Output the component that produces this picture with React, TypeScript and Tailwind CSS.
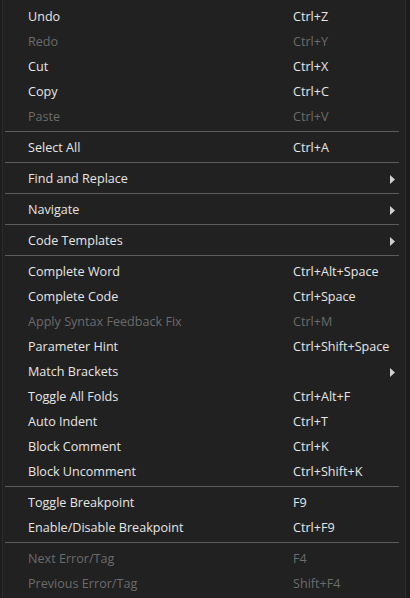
import React from "react";

type Item =
  | { sep: true }
  | { label: string; shortcut?: string; disabled?: boolean; sub?: boolean; sep?: false };

const items: Item[] = [
  { label: "Undo", shortcut: "Ctrl+Z" },
  { label: "Redo", shortcut: "Ctrl+Y", disabled: true },
  { label: "Cut", shortcut: "Ctrl+X" },
  { label: "Copy", shortcut: "Ctrl+C" },
  { label: "Paste", shortcut: "Ctrl+V", disabled: true },
  { sep: true },
  { label: "Select All", shortcut: "Ctrl+A" },
  { sep: true },
  { label: "Find and Replace", sub: true },
  { sep: true },
  { label: "Navigate", sub: true },
  { sep: true },
  { label: "Code Templates", sub: true },
  { sep: true },
  { label: "Complete Word", shortcut: "Ctrl+Alt+Space" },
  { label: "Complete Code", shortcut: "Ctrl+Space" },
  { label: "Apply Syntax Feedback Fix", shortcut: "Ctrl+M", disabled: true },
  { label: "Parameter Hint", shortcut: "Ctrl+Shift+Space" },
  { label: "Match Brackets", sub: true },
  { label: "Toggle All Folds", shortcut: "Ctrl+Alt+F" },
  { label: "Auto Indent", shortcut: "Ctrl+T" },
  { label: "Block Comment", shortcut: "Ctrl+K" },
  { label: "Block Uncomment", shortcut: "Ctrl+Shift+K" },
  { sep: true },
  { label: "Toggle Breakpoint", shortcut: "F9" },
  { label: "Enable/Disable Breakpoint", shortcut: "Ctrl+F9" },
  { sep: true },
  { label: "Next Error/Tag", shortcut: "F4", disabled: true },
  { label: "Previous Error/Tag", shortcut: "Shift+F4", disabled: true },
];

export default function App() {
  return (
    <div
      className="flex w-[410px] h-[598px] bg-[#1b1b1b] overflow-hidden"
      style={{ fontFamily: '"Open Sans", "Noto Sans", sans-serif' }}
    >
      <div className="w-[2px] shrink-0 bg-[#1e1e1e]" />
      <div className="w-[404px] shrink-0 h-full bg-[#212121] border-x border-[#2c2c2c] pt-[4px] flex flex-col">
        {items.map((it, i) =>
          it.sep ? (
            <div key={i} className="h-[6px] shrink-0 pt-[2px] pl-[2px] pr-[6px]">
              <div className="h-px w-full bg-[#5c5c5c]" />
            </div>
          ) : (
            <div
              key={i}
              className={
                "h-[25px] shrink-0 flex items-center pt-px text-[12.6px] pl-[25px] " +
                (it.disabled ? "text-[#6b6b6b]" : "text-[#e6e6e6]")
              }
            >
              <span className="w-[265px] shrink-0 whitespace-nowrap">{it.label}</span>
              <span className="flex-1 whitespace-nowrap">{it.shortcut}</span>
              {it.sub && (
                <svg width="5" height="9" viewBox="0 0 5 9" className="mr-[10px]">
                  <path d="M0 0 L5 4.5 L0 9 Z" fill="#d0d0d0" />
                </svg>
              )}
            </div>
          )
        )}
      </div>
    </div>
  );
}
